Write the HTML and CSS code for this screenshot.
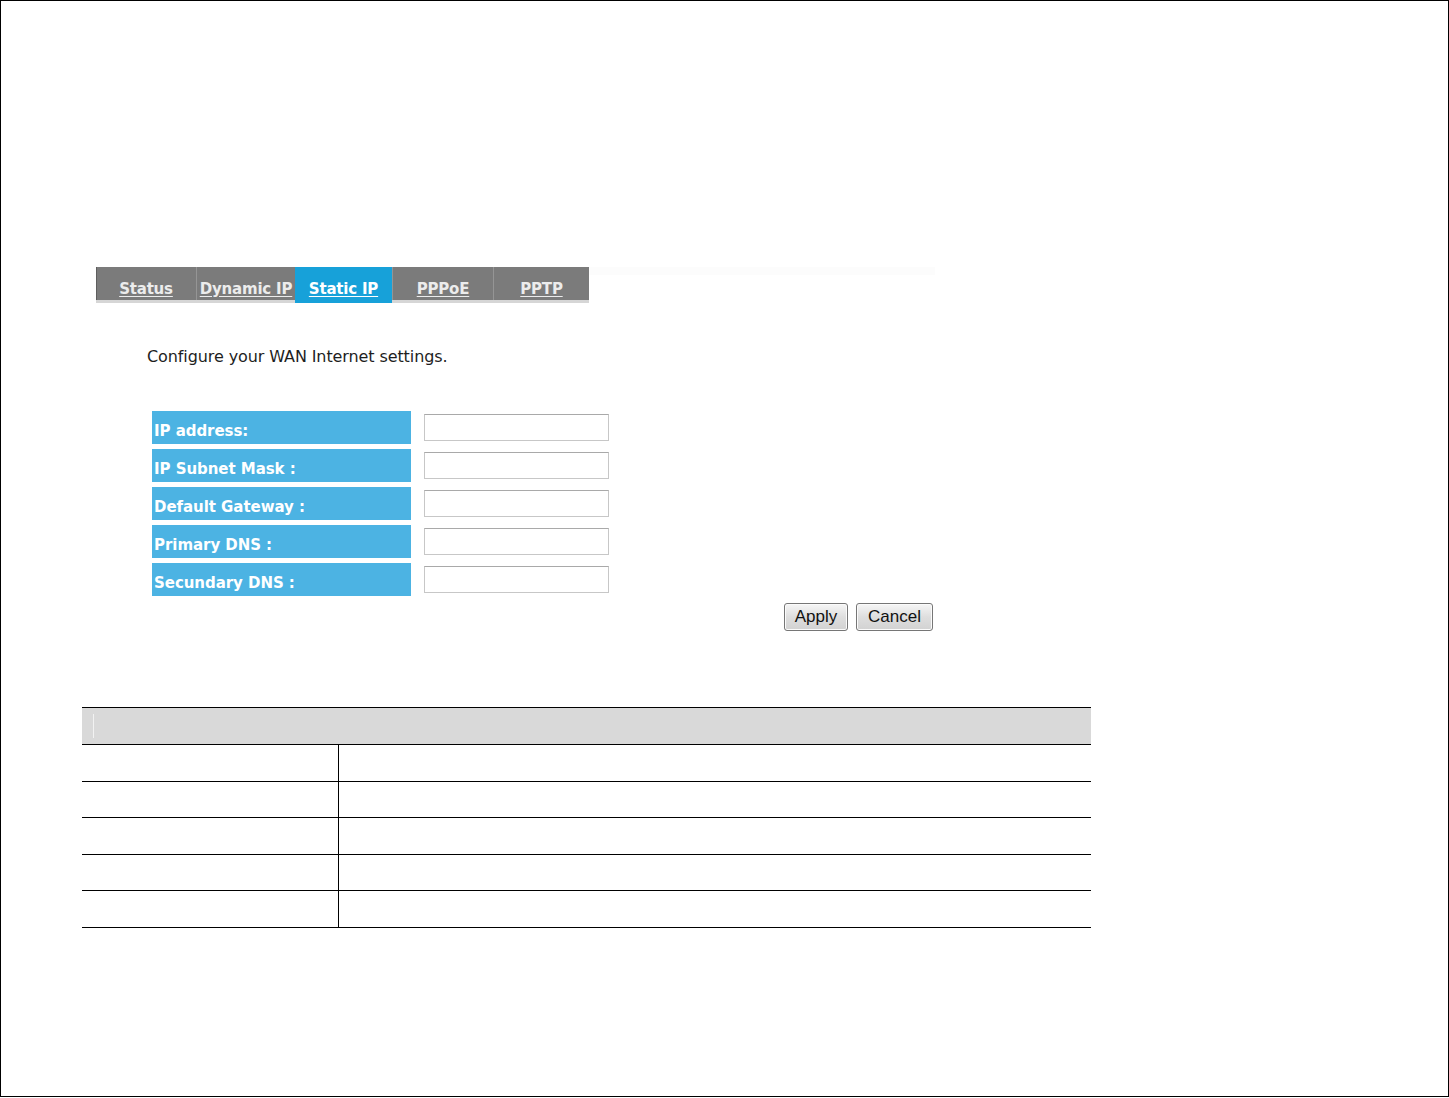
FILE: index.html
```html
<!DOCTYPE html>
<html>
<head>
<meta charset="utf-8">
<title>WAN Static IP</title>
<link rel="stylesheet" href="styles.css">
</head>
<body>
<div class="frame">
  <div class="tabrow">
    <nav class="tabbar">
      <a class="tab tab-status" href="#">Status</a>
      <a class="tab tab-dynamic" href="#">Dynamic IP</a>
      <a class="tab tab-static active" href="#">Static IP</a>
      <a class="tab tab-pppoe" href="#">PPPoE</a>
      <a class="tab tab-pptp" href="#">PPTP</a>
    </nav>
    <div class="tabtail"></div>
  </div>

  <p class="intro">Configure your WAN Internet settings.</p>

  <div class="form">
    <div class="row"><div class="label">IP address:</div><input class="field" type="text"></div>
    <div class="row"><div class="label">IP Subnet Mask :</div><input class="field" type="text"></div>
    <div class="row"><div class="label">Default Gateway :</div><input class="field" type="text"></div>
    <div class="row"><div class="label">Primary DNS :</div><input class="field" type="text"></div>
    <div class="row"><div class="label">Secundary DNS :</div><input class="field" type="text"></div>
  </div>

  <div class="actions">
    <button class="btn btn-apply" type="button">Apply</button>
    <button class="btn btn-cancel" type="button">Cancel</button>
  </div>

  <table class="desc">
    <thead>
      <tr><th colspan="2"><span class="hmark"></span></th></tr>
    </thead>
    <tbody>
      <tr><td class="c1"></td><td class="c2"></td></tr>
      <tr><td class="c1"></td><td class="c2"></td></tr>
      <tr><td class="c1"></td><td class="c2"></td></tr>
      <tr><td class="c1"></td><td class="c2"></td></tr>
      <tr><td class="c1"></td><td class="c2"></td></tr>
    </tbody>
  </table>
</div>
</body>
</html>
```

FILE: styles.css
```css
html, body {
  margin: 0;
  padding: 0;
  background: #ffffff;
}

.frame {
  box-sizing: border-box;
  width: 1449px;
  height: 1097px;
  border: 1px solid #000000;
  padding-top: 266px;
  font-family: "DejaVu Sans", Verdana, sans-serif;
}

.tabrow {
  display: flex;
  align-items: flex-start;
  margin-left: 95px;
}

.tabbar {
  display: flex;
  width: 493px;
  height: 33px;
  background: #7b7b7b;
  border-bottom: 3px solid #d6d6d6;
  box-shadow: inset 1px 0 0 #5e5e5e;
}

.tabtail {
  width: 346px;
  height: 8px;
  background: #fcfcfc;
}

.tab {
  box-sizing: border-box;
  display: flex;
  align-items: center;
  justify-content: center;
  height: 33px;
  padding-top: 10px;
  font-size: 15px;
  font-weight: bold;
  color: #ececec;
  text-decoration: underline;
  text-underline-offset: 2px;
  letter-spacing: -0.2px;
}

.tab-status { width: 100px; }
.tab-dynamic { width: 99px; border-left: 1px solid #959595; }
.tab-static { width: 97px; }
.tab-pppoe { width: 101px; border-left: 1px solid #959595; }
.tab-pptp { width: 96px; border-left: 1px solid #959595; }

.tab.active {
  background: #17a1d9;
  color: #ffffff;
  height: 36px;
  margin-bottom: -3px;
  padding-bottom: 3px;
}

.intro {
  margin: 44px 0 0 146px;
  font-size: 16px;
  line-height: 19px;
  color: #1e1e1e;
  letter-spacing: -0.1px;
}

.form {
  display: flex;
  flex-direction: column;
  gap: 5px;
  margin: 45px 0 0 151px;
}

.row {
  display: flex;
  align-items: flex-start;
  gap: 13px;
  height: 33px;
}

.label {
  box-sizing: border-box;
  width: 259px;
  height: 33px;
  line-height: 34px;
  padding: 3px 0 0 2px;
  background: #4cb3e3;
  color: #ffffff;
  font-size: 15px;
  font-weight: bold;
  letter-spacing: -0.05px;
}

.field {
  box-sizing: border-box;
  width: 185px;
  height: 27px;
  margin: 3px 0 0 0;
  padding: 0;
  border: 1px solid #c7c7c7;
  border-top-color: #a9a9a9;
  background: #ffffff;
}

.actions {
  display: flex;
  gap: 8px;
  margin: 7px 0 0 783px;
}

.btn {
  box-sizing: border-box;
  height: 28px;
  padding: 0 0 1px 0;
  border: 1px solid #767676;
  border-radius: 3px;
  background: linear-gradient(#f6f6f6, #dedede 50%, #d2d2d2);
  box-shadow: inset 0 0 0 1px #fbfbfb;
  font-family: "Liberation Sans", Arial, sans-serif;
  font-size: 17px;
  color: #111111;
}

.btn-apply { width: 64px; }
.btn-cancel { width: 77px; }

.desc {
  margin: 76px 0 0 81px;
  width: 1009px;
  border-collapse: collapse;
}

.desc th {
  height: 36px;
  padding: 0;
  background: #d9d9d9;
  border-top: 1px solid #000000;
  border-bottom: 1px solid #000000;
  text-align: left;
}

.hmark {
  display: block;
  width: 1px;
  height: 24px;
  margin-left: 11px;
  background: #f2f2f2;
}

.desc td {
  height: 35.6px;
  padding: 0;
  border-bottom: 1px solid #000000;
}

.desc td.c1 {
  width: 256px;
  border-right: 1px solid #000000;
}
```
